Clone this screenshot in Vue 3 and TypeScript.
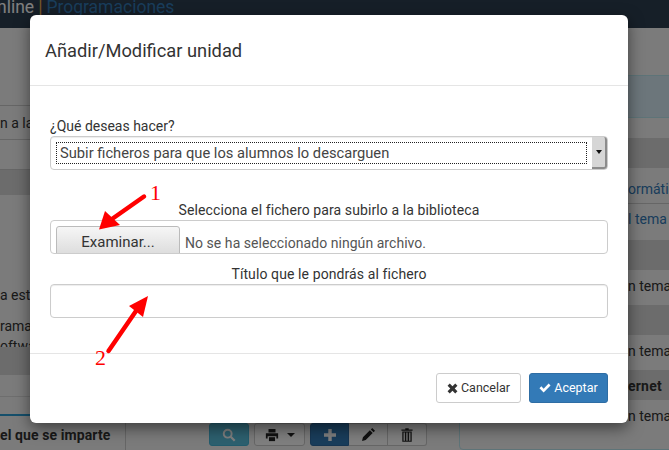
<script setup lang="ts">
interface Row {
  text: string
  kind: string
}
const rows: Row[] = [
  { text: '', kind: 'band top-band' },
  { text: 'ormáti', kind: 'link tall' },
  { text: 'l tema', kind: 'link short' },
  { text: '', kind: 'band' },
  { text: 'n tema', kind: 'plain' },
  { text: '', kind: 'band' },
  { text: 'n tema', kind: 'plain' },
  { text: 'ernet', kind: 'band head' },
  { text: 'n tema', kind: 'plain' },
]
</script>

<template>
  <div class="page">
    <header class="navbar">
      <span class="brand">nline</span><span class="sep">|</span><span class="brand-link">Programaciones</span>
    </header>

    <main class="content">
      <div class="col-left">
        <div class="l-top"></div>
        <div class="l-row">n a la</div>
        <div class="l-empty"></div>
        <div class="l-band"></div>
        <div class="l-text">
          <p>a est</p>
          <p class="para">rama<br />oftwa</p>
        </div>
        <div class="l-band low"></div>
        <div class="l-row2"></div>
        <div class="l-tabs"></div>
        <div class="l-cell">el que se imparte</div>
      </div>

      <div class="col-mid">
        <div class="toolbar">
          <button class="tb search" aria-label="Buscar">
            <svg viewBox="0 0 16 16" width="14" height="14"><circle cx="6.500" cy="6.500" r="4.500" fill="none" stroke="#fff" stroke-width="2.200" /><path d="M10 10l4.500 4.500" stroke="#fff" stroke-width="2.600" /></svg>
          </button>
          <button class="tb print" aria-label="Imprimir">
            <svg viewBox="0 0 16 16" width="14" height="14"><path d="M4 1h8v4H4zM1 6h14v6h-2V9.500H3V12H1z" fill="#222" /><path d="M4.500 10.500h7V15h-7z" fill="#222" /></svg>
            <i class="caret"></i>
          </button>
          <div class="group">
            <button class="tb add" aria-label="Añadir">
              <svg viewBox="0 0 14 14" width="12" height="12"><path d="M5 0h4v5h5v4H9v5H5V9H0V5h5z" fill="#fff" /></svg>
            </button>
            <button class="tb edit" aria-label="Editar">
              <svg viewBox="0 0 14 14" width="13" height="13"><path d="M0 14l1-4 7.500-7.500 3 3L4 13zM9.500 1.500L11 0l3 3-1.500 1.500z" fill="#222" /></svg>
            </button>
            <button class="tb trash" aria-label="Eliminar">
              <svg viewBox="0 0 14 16" width="12" height="14"><path d="M5 0h4v1.500h4.500V3H.5V1.500H5zM1.500 4h11v12h-11zM3 5.200v9.600h1.500V5.200zM6.200 5.200v9.600h1.500V5.200zM9.500 5.200v9.600H11V5.200z" fill="#222" fill-rule="evenodd" /></svg>
            </button>
          </div>
        </div>
      </div>

      <div class="col-right">
        <div class="panel">
          <div class="panel-heading"></div>
          <div v-for="(r, i) in rows" :key="i" class="p-row" :class="r.kind">{{ r.text }}</div>
        </div>
      </div>
    </main>

    <div class="backdrop">
      <section class="modal">
        <div class="modal-header">
          <h4>Añadir/Modificar unidad</h4>
        </div>
        <div class="modal-body">
          <label class="lbl">¿Qué deseas hacer?</label>
          <div class="select">
            <div class="select-val"><span>Subir ficheros para que los alumnos lo descarguen</span></div>
            <div class="select-btn"><i></i></div>
          </div>
          <label class="lbl center gap-l">Selecciona el fichero para subirlo a la biblioteca</label>
          <div class="file">
            <button class="file-btn">Examinar...</button>
            <span class="file-txt">No se ha seleccionado ningún archivo.</span>
          </div>
          <label class="lbl center gap-s">Título que le pondrás al fichero</label>
          <input class="input" type="text" />
        </div>
        <div class="modal-footer">
          <button class="btn default">
            <svg viewBox="0 0 12 12" width="11" height="11"><path d="M3 .6L6 3.600 9 .6 11.400 3 8.400 6l3 3L9 11.400l-3-3-3 3L.6 9l3-3-3-3z" fill="#333" /></svg>
            Cancelar
          </button>
          <button class="btn primary">
            <svg viewBox="0 0 13 11" width="12" height="10"><path d="M.4 5.800L2.500 3.700 5 6.200 10.500.6l2.100 2.100L5 10.400z" fill="#fff" /></svg>
            Aceptar
          </button>
        </div>
      </section>
    </div>

    <svg class="marks" viewBox="0 0 669 450" width="669" height="450">
      <path d="M144 196.500L112 219" stroke="#ff0000" stroke-width="4.500" stroke-linecap="round" />
      <path d="M99 229.500L120 225 105 211z" fill="#ff0000" />
      <path d="M108.500 351L136 311" stroke="#ff0000" stroke-width="4.500" stroke-linecap="round" />
      <path d="M148 296L129 306 143 317z" fill="#ff0000" />
    </svg>
    <span class="num one">1</span>
    <span class="num two">2</span>
  </div>
</template>

<style>
html, body { margin: 0; background: #fff; }
</style>

<style scoped>
.page {
  position: relative;
  width: 669px;
  height: 450px;
  overflow: hidden;
  background: #f6f6f6;
  font-family: Roboto, "Liberation Sans", sans-serif;
  font-size: 14px;
  line-height: 20px;
  color: #333;
}
.navbar {
  height: 28px;
  background: #2c3e50;
  font-size: 17.500px;
  line-height: 15px;
  white-space: nowrap;
  display: flex;
}
.brand { color: #fff; margin-left: -3px; }
.sep { color: #f0ad4e; margin: 0 4px; }
.brand-link { color: #337ab7; }

.content { display: flex; height: 422px; }
.col-left { width: 126px; flex: none; white-space: nowrap; }
.l-top { height: 77px; border-bottom: 1px solid #ccc; }
.l-row { height: 33px; line-height: 34px; border-bottom: 1px solid #ccc; }
.l-empty { height: 29px; border-bottom: 1px solid #ccc; }
.l-band { height: 25px; background: #d9d9d9; }
.l-band.low { height: 28px; }
.l-text { height: 152px; overflow: hidden; box-sizing: border-box; padding-top: 90px; }
.l-text p { margin: 0; }
.l-text .para { margin-top: 11px; }
.l-row2 { height: 21px; border-bottom: 1px solid #ddd; }
.l-tabs { height: 17px; border-bottom: 2px solid #2a9fd6; }
.l-cell {
  height: 34px;
  line-height: 39px;
  font-weight: 700;
  letter-spacing: 0.1px;
  border-right: 1px solid #ccc;
}

.col-mid { width: 333px; flex: none; display: flex; flex-direction: column; justify-content: flex-end; }
.toolbar { display: flex; gap: 5px; padding: 0 0 4px 83px; height: 23px; }
.group { display: flex; }
.tb {
  height: 23px;
  padding: 0;
  margin: 0;
  border: 1px solid #ccc;
  border-radius: 3px;
  background: #fff;
  display: flex;
  align-items: center;
  justify-content: center;
  box-sizing: border-box;
}
.search { width: 40px; background: #5bc0de; border-color: #46b8da; }
.print { width: 51px; gap: 8px; }
.caret {
  width: 0;
  height: 0;
  border-left: 4px solid transparent;
  border-right: 4px solid transparent;
  border-top: 4px solid #222;
}
.add { width: 39px; background: #337ab7; border-color: #2e6da4; border-radius: 3px 0 0 3px; }
.edit { width: 39px; border-radius: 0; border-left: 0; }
.trash { width: 39px; border-radius: 0 3px 3px 0; border-left: 0; }

.col-right { flex: 1; padding-top: 47px; overflow: hidden; }
.panel {
  width: 220px;
  height: 375px;
  box-sizing: border-box;
  border: 1px solid #bce8f1;
  border-radius: 4px;
  white-space: nowrap;
}
.panel-heading {
  height: 41px;
  background: #d9edf7;
  border-bottom: 1px solid #bce8f1;
}
.p-row { padding-left: 168px; box-sizing: border-box; }
.band { background: #d9d9d9; height: 30px; }
.top-band { margin-top: 20px; }
.link { color: #337ab7; }
.link.tall { height: 36px; line-height: 42px; border-bottom: 1px solid #ccc; }
.link.short { height: 36px; line-height: 30px; }
.plain { height: 35px; line-height: 32px; }
.band.head { font-weight: 700; line-height: 32px; letter-spacing: 0.2px; }

.backdrop { position: absolute; inset: 0; background: rgba(0, 0, 0, 0.5); }
.modal {
  width: 598px;
  height: 408px;
  margin: 15px 0 0 30px;
  background: #fff;
  border-radius: 6px;
  box-shadow: 0 5px 15px rgba(0, 0, 0, 0.5);
  display: flex;
  flex-direction: column;
}
.modal-header { height: 71px; box-sizing: border-box; padding: 26px 15px 0; border-bottom: 1px solid #e5e5e5; flex: none; }
.modal-header h4 { margin: 0; font-size: 18.300px; font-weight: 400; line-height: 20px; color: #333; }
.modal-body { padding: 30px 20px 0; height: 267px; box-sizing: border-box; display: flex; flex-direction: column; flex: none; }
.lbl { display: block; height: 20px; font-weight: 400; }
.center { text-align: center; letter-spacing: 0.1px; }
.gap-l { margin-top: 30px; }
.gap-s { margin-top: 10px; }
.select {
  height: 34px;
  box-sizing: border-box;
  border: 1px solid #ccc;
  border-radius: 4px;
  display: flex;
  box-shadow: inset 0 1px 1px rgba(0, 0, 0, 0.075);
}
.select-val { flex: 1; padding: 5px; min-width: 0; }
.select-val span {
  display: block;
  height: 22px;
  font-size: 14.700px;
  line-height: 20px;
  box-sizing: border-box;
  border: 1px dotted #222;
  padding-left: 3px;
  color: #444;
  white-space: nowrap;
}
.select-btn {
  width: 15px;
  flex: none;
  background: #d6d6d6;
  border-right: 2px solid #8c8c8c;
  border-bottom: 2px solid #8c8c8c;
  border-radius: 0 3px 3px 0;
  display: flex;
  align-items: center;
  justify-content: center;
  box-sizing: border-box;
}
.select-btn i {
  width: 0;
  height: 0;
  border-left: 3.500px solid transparent;
  border-right: 3.500px solid transparent;
  border-top: 4px solid #111;
}
.file {
  height: 34px;
  box-sizing: border-box;
  border: 1px solid #ccc;
  border-radius: 4px;
  padding: 5px 0 0 5px;
  overflow: hidden;
  display: flex;
  align-items: flex-start;
  gap: 5px;
}
.file-btn {
  width: 124px;
  height: 34px;
  margin: 0;
  padding: 5px 0 0;
  box-sizing: border-box;
  flex: none;
  font: inherit;
  font-size: 15px;
  line-height: 20px;
  display: flex;
  justify-content: center;
  align-items: flex-start;
  color: #333;
  border: 1px solid #bbb;
  border-radius: 3px;
  background: linear-gradient(#f6f6f6, #d8d8d8);
}
.file-txt { line-height: 20px; padding-top: 7px; color: #555; white-space: nowrap; letter-spacing: 0.05px; }
.input {
  height: 34px;
  box-sizing: border-box;
  border: 1px solid #ccc;
  border-radius: 4px;
  background: #fff;
  margin: 0;
  padding: 0;
  box-shadow: inset 0 1px 1px rgba(0, 0, 0, 0.075);
}
.modal-footer {
  flex: 1;
  border-top: 1px solid #e5e5e5;
  padding: 19px 20px 0;
  display: flex;
  justify-content: flex-end;
  align-items: flex-start;
  gap: 8px;
}
.btn {
  height: 30px;
  padding: 0;
  margin: 0;
  box-sizing: border-box;
  font: inherit;
  font-size: 12.500px;
  border-radius: 3px;
  border: 1px solid #ccc;
  display: flex;
  align-items: center;
  justify-content: center;
  gap: 3px;
}
.default { width: 85px; background: #fff; color: #333; }
.primary { width: 79px; background: #337ab7; border-color: #2e6da4; color: #fff; }

.marks { position: absolute; left: 0; top: 0; pointer-events: none; }
.num {
  position: absolute;
  font-family: "Liberation Serif", serif;
  font-size: 22px;
  line-height: 22px;
  color: #ff0000;
}
.one { left: 150px; top: 182px; }
.two { left: 95px; top: 347px; }
</style>
